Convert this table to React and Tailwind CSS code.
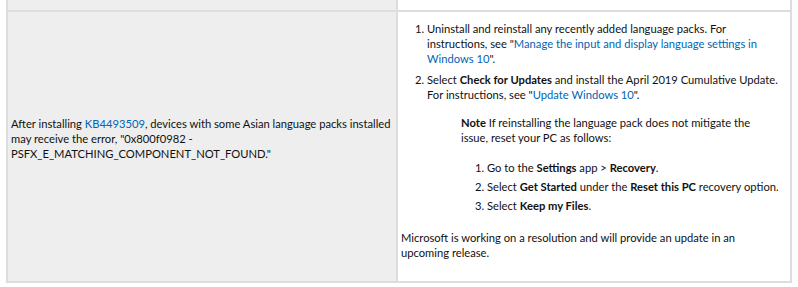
import React from "react";

const Link = ({ children }) => (
  <a href="#" className="text-[#0065b3] no-underline">
    {children}
  </a>
);

const App = () => {
  return (
    <div
      className="w-[798px] h-[287px] bg-white pl-[6px] text-[11.2px] leading-[15px] text-[#111]"
      style={{ fontFamily: 'Lato, "Open Sans", sans-serif' }}
    >
      <div className="w-[786px] border-x-2 border-b-2 border-[#dddddd]">
        {/* previous row, cut off */}
        <div className="grid grid-cols-[390px_1fr] h-[12px] border-b-2 border-[#dddddd]">
          <div className="bg-[#eeeeee] border-r-2 border-[#dddddd]" />
          <div className="bg-white" />
        </div>

        <div className="grid grid-cols-[390px_1fr] h-[269px]">
          <div className="bg-[#eeeeee] border-r-2 border-[#dddddd] flex items-center pl-[3px] pr-[2px] pb-[16px]">
            <p>
              After installing <Link>KB4493509</Link>, devices with some Asian language packs installed
              may receive the error, "0x800f0982 - PSFX_E_MATCHING_COMPONENT_NOT_FOUND."
            </p>
          </div>

          <div className="bg-white pl-[3px] pr-[6px] pt-[9px]">
            <ol className="list-decimal pl-[26px] space-y-[6px]">
              <li>
                Uninstall and reinstall any recently added language packs. For instructions, see "
                <Link>Manage the input and display language settings in Windows 10</Link>".
              </li>
              <li>
                Select <b>Check for Updates</b> and install the April 2019 Cumulative Update. For
                instructions, see "<Link>Update Windows 10</Link>".
              </li>
            </ol>

            <p className="ml-[60px] mr-[30px] mt-[13px]">
              <b>Note</b> If reinstalling the language pack does not mitigate the issue, reset your PC
              as follows:
            </p>
            <ol className="list-decimal pl-[86px] mt-[15px] space-y-[4px]">
              <li>
                Go to the <b>Settings</b> app &gt; <b>Recovery</b>.
              </li>
              <li>
                Select <b>Get Started</b> under the <b>Reset this PC</b> recovery option.
              </li>
              <li>
                Select <b>Keep my Files</b>.
              </li>
            </ol>

            <p className="mt-[17px]">
              Microsoft is working on a resolution and will provide an update in an upcoming release.
            </p>
          </div>
        </div>
      </div>
    </div>
  );
};

export default App;
